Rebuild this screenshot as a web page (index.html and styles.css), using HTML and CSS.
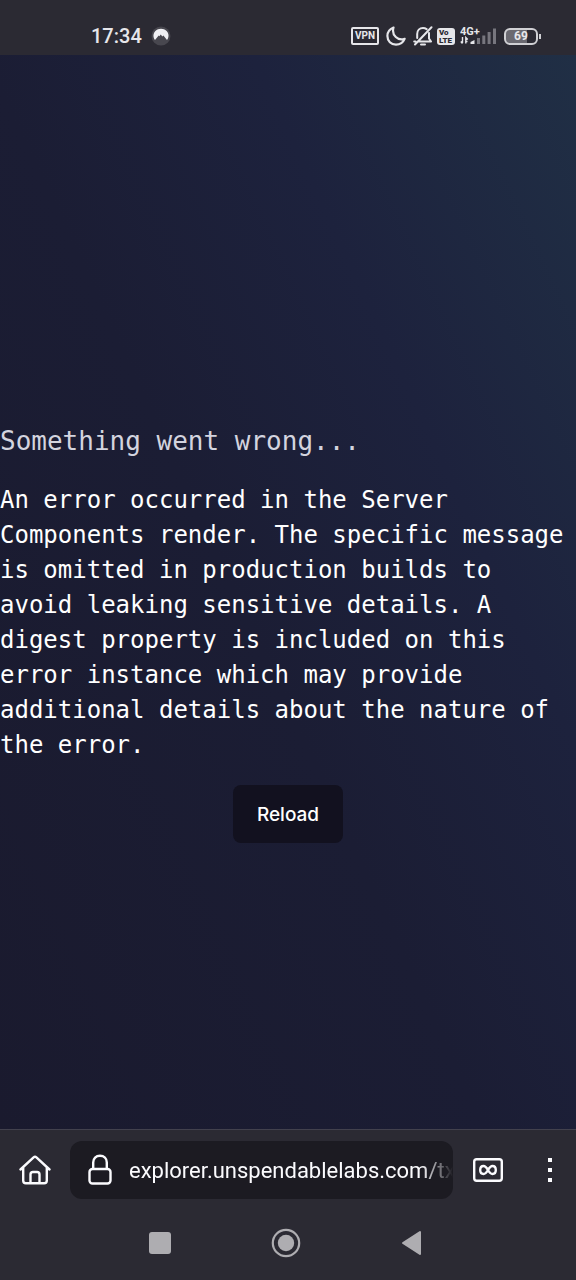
FILE: index.html
```html
<!DOCTYPE html>
<html lang="en">
<head>
    <meta charset="UTF-8">
    <meta name="viewport" content="width=device-width, initial-scale=1.0">
    <title>Something went wrong</title>
    <link rel="stylesheet" href="styles.css">
</head>
<body>
    <header class="status-bar">
        <div class="status-left">
            <span class="clock">17:34</span>
            <svg width="20" height="20" viewBox="0 0 20 20">
                <circle cx="10" cy="10" r="9.5" fill="#48474f"/>
                <path d="M4 14C1.800 11.200 2 7.400 4.400 5C7.400 2 12.600 2 15.600 5C18 7.400 18.200 11.200 16 14L12.400 9.600L11.300 10.600L9.800 8.400L8.300 10.300L7.700 9.600Z" fill="#f0f0f4"/>
            </svg>
        </div>
        <div class="status-right">
            <span class="vpn">VPN</span>
            <svg width="20" height="20" viewBox="0 0 20 20" fill="none" stroke="#e6e6ea" stroke-width="2.200" stroke-linejoin="round">
                <path d="M7.500 1.500C3.800 3 1.400 6 1.400 10C1.400 15 5 18.600 10 18.600C14 18.600 17.200 16.200 18.600 12.800C12.200 15.200 5.200 9.200 7.500 1.500Z"/>
            </svg>
            <svg width="20" height="20" viewBox="0 0 20 20" fill="none" stroke="#e6e6ea" stroke-width="2" stroke-linecap="round" stroke-linejoin="round">
                <path d="M4.200 12V8C4.200 4.600 6.500 2 10 2C11.400 2 12.600 2.400 13.600 3.100M16 7V12.500L18 15.500H6M1.200 15.500H2.500M8 18.600H12M18.500 1.200L2 18.500"/>
            </svg>
            <span class="volte"><span>Vo</span><span>LTE</span></span>
            <svg class="signal" width="37" height="20" viewBox="0 0 37 20">
                <text x="0" y="9" class="signal-label">4G+</text>
                <path d="M2.500 11V17M0.800 15.500L2.500 17.500M5.800 17.500V11.500L7.800 13.500M5.800 15.500H7.500" fill="none" stroke="#e6e6ea" stroke-width="1.400"/>
                <path d="M10.500 18V16L14.500 14V18Z" fill="#e6e6ea"/>
                <path d="M17 18V12H20V18ZM22.300 18V9.500H25.300V18ZM27.600 18V6H30.600V18ZM33 18V2.500H36V18Z" fill="#77767e"/>
            </svg>
            <span class="battery">69</span>
        </div>
    </header>

    <main class="page">
        <h1>Something went wrong...</h1>
        <p>An error occurred in the Server Components render. The specific message is omitted in production builds to avoid leaking sensitive details. A digest property is included on this error instance which may provide additional details about the nature of the error.</p>
        <button class="reload" type="button" onclick="location.reload()">Reload</button>
    </main>

    <div class="toolbar">
        <button class="icon-button" type="button" aria-label="Home">
            <svg width="32" height="30" viewBox="0 0 32 30" fill="none" stroke="#fbfbfe" stroke-width="2.400" stroke-linecap="round" stroke-linejoin="round">
                <path d="M1.500 14.500L14.600 2.300Q16 1.100 17.400 2.300L30.500 14.500M4.200 12.500V25.500Q4.200 28.200 6.900 28.200H25.100Q27.800 28.200 27.800 25.500V12.500M11.500 28V19.500Q11.500 17 14 17H18Q20.500 17 20.500 19.500V28"/>
            </svg>
        </button>
        <div class="address">
            <svg width="24" height="32" viewBox="0 0 24 32" fill="none" stroke="#fbfbfe" stroke-width="2.400">
                <rect x="1.500" y="15" width="21" height="14.500" rx="3"/>
                <path d="M5.200 15V8.500C5.200 4.400 8 1.800 12 1.800S18.800 4.400 18.800 8.500V15"/>
            </svg>
            <input type="text" aria-label="Address" value="explorer.unspendablelabs.com/tx" readonly>
        </div>
        <button class="icon-button" type="button" aria-label="Tabs">
            <svg width="30" height="24" viewBox="0 0 30 24" fill="none" stroke="#fbfbfe" stroke-width="2.400">
                <rect x="1.200" y="1.200" width="27.600" height="21.600" rx="2.500"/>
                <path d="M15 12C13.500 9.500 12.500 8 10.600 8C8.500 8 7.200 9.800 7.200 12S8.500 16 10.600 16C12.500 16 13.500 14.500 15 12C16.500 9.500 17.500 8 19.400 8C21.500 8 22.800 9.800 22.800 12S21.500 16 19.400 16C17.500 16 16.500 14.500 15 12Z"/>
            </svg>
        </button>
        <button class="icon-button menu-button" type="button" aria-label="Menu">
            <svg width="4" height="24" viewBox="0 0 4 24" fill="#fbfbfe">
                <path d="M0 0H4V4H0ZM0 10H4V14H0ZM0 20H4V24H0Z"/>
            </svg>
        </button>
    </div>

    <nav class="system-nav">
        <button class="icon-button" type="button" aria-label="Recent apps">
            <svg width="22" height="22" viewBox="0 0 22 22" fill="#aeadb1"><rect width="22" height="22" rx="3"/></svg>
        </button>
        <button class="icon-button" type="button" aria-label="Home screen">
            <svg width="30" height="30" viewBox="0 0 30 30">
                <circle cx="15" cy="15" r="13.200" fill="none" stroke="#aeadb1" stroke-width="2.200"/>
                <circle cx="15" cy="15" r="8.200" fill="#aeadb1"/>
            </svg>
        </button>
        <button class="icon-button" type="button" aria-label="Back">
            <svg width="22" height="26" viewBox="0 0 22 26" fill="#aeadb1" stroke="#aeadb1" stroke-width="2" stroke-linejoin="round">
                <path d="M2 13L19 2V24Z"/>
            </svg>
        </button>
    </nav>
</body>
</html>
```
FILE: styles.css
```css
* {
    box-sizing: border-box;
}

body {
    margin: 0;
    min-height: 100vh;
    display: flex;
    flex-direction: column;
    background-color: #2b2a33;
    font-family: Roboto, sans-serif;
    color: #ffffff;
}

svg {
    display: block;
    flex-shrink: 0;
}

.status-bar {
    display: flex;
    justify-content: space-between;
    height: 55px;
    padding: 16px 35px 0 91px;
    color: #e6e6ea;
}

.status-left,
.status-right {
    display: flex;
    align-items: center;
    height: 40px;
}

.status-left {
    gap: 9px;
}

.status-right {
    gap: 7px;
}

.clock {
    font-size: 20px;
    font-weight: 500;
}

.vpn {
    width: 28px;
    height: 18px;
    border: 2px solid #e6e6ea;
    border-radius: 2px;
    font-size: 10px;
    font-weight: 700;
    line-height: 14px;
    text-align: center;
}

.volte {
    display: flex;
    flex-direction: column;
    width: 18px;
    height: 17px;
    margin: 0 -3px;
    padding: 1px 2px;
    border-radius: 3px;
    background-color: #e6e6ea;
    color: #2b2a33;
    font-size: 8px;
    font-weight: 900;
    line-height: 8px;
}

.signal {
    margin-left: 1px;
}

.signal-label {
    fill: #e6e6ea;
    font-size: 11px;
    font-weight: 700;
}

.battery {
    position: relative;
    width: 34px;
    height: 17px;
    margin-right: 3px;
    border: 2px solid #d0d0d4;
    border-radius: 6px;
    background: linear-gradient(to right, #6a6971 69%, #2b2a33 69%);
    font-size: 12px;
    font-weight: 700;
    line-height: 13px;
    text-align: center;
}

.battery::after {
    content: "";
    position: absolute;
    top: 4px;
    right: -5px;
    width: 2px;
    height: 5px;
    background-color: #d0d0d4;
}

.page {
    flex: 1;
    display: flex;
    flex-direction: column;
    justify-content: center;
    align-items: flex-start;
    padding-top: 83px;
    background: linear-gradient(65deg, #1a1a2e 0%, #1b1d34 45%, #1d223d 70%, #202f45 100%);
}

h1 {
    margin: 0 0 24px;
    color: #d3d4df;
    font-family: "DejaVu Sans Mono", monospace;
    font-size: 26px;
    font-weight: 400;
    line-height: 35px;
}

.page p {
    margin: 0 0 22px;
    font-family: "DejaVu Sans Mono", monospace;
    font-size: 24px;
    line-height: 35px;
}

.reload {
    align-self: center;
    height: 58px;
    padding: 0 24px;
    border: none;
    border-radius: 8px;
    background-color: #12111f;
    color: #ffffff;
    font-family: Inter, sans-serif;
    font-size: 19px;
    font-weight: 500;
    cursor: pointer;
}

.toolbar {
    display: flex;
    align-items: center;
    height: 80px;
    padding: 0 24px 0 19px;
    border-top: 1px solid #42414d;
}

.icon-button {
    padding: 0;
    border: none;
    background: none;
    cursor: pointer;
}

.address {
    flex: 1;
    min-width: 0;
    display: flex;
    align-items: center;
    gap: 17px;
    height: 58px;
    margin: 0 20px 0 19px;
    padding-left: 18px;
    border-radius: 12px;
    background-color: #1c1b22;
}

.address input {
    flex: 1;
    min-width: 0;
    padding: 2px 0 0;
    border: none;
    outline: none;
    background: none;
    color: #fbfbfe;
    font-family: Roboto, sans-serif;
    font-size: 22px;
    /* long addresses fade out at the right edge */
    mask-image: linear-gradient(to left, transparent, #000000 32px);
}

.menu-button {
    margin-left: 45px;
}

.system-nav {
    display: flex;
    justify-content: center;
    align-items: center;
    gap: 100px;
    height: 71px;
    padding: 0 4px 4px 0;
}
```
